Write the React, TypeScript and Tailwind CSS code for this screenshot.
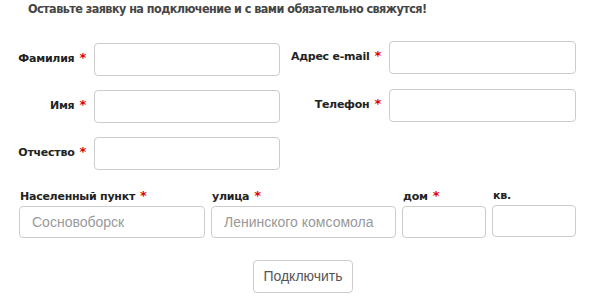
import React from "react";

const labelFont = { fontFamily: '"DejaVu Sans", Verdana, sans-serif' };

function Star() {
  return <span className="text-[#e00000] ml-[5px] text-[13px] leading-none font-bold">*</span>;
}

function Field({ label, labelW, inputW }: { label: string; labelW: number; inputW: number }) {
  return (
    <div className="flex items-center">
      <div
        className="text-right text-[11px] font-bold text-[#222] pr-[8px] tracking-[-0.25px]"
        style={{ width: labelW }}
      >
        {label}
        <Star />
      </div>
      <input
        className="h-[33px] border border-[#cccccc] rounded-[4px] bg-white outline-none"
        style={{ width: inputW }}
      />
    </div>
  );
}

export default function App() {
  return (
    <div className="w-[600px] h-[301px] bg-white relative overflow-hidden" style={labelFont}>
      <div
        className="pl-[28px] pt-0 text-[12.5px] leading-[18px] font-bold text-[#454545] tracking-[-0.55px]"
        style={{ fontFamily: '"DejaVu Sans Condensed", "DejaVu Sans", sans-serif' }}
      >
        Оставьте заявку на подключение и с вами обязательно свяжутся!
      </div>
      <div className="flex">
        <div className="flex flex-col gap-[14px] mt-[25px] w-[280px]">
          <Field label="Фамилия" labelW={94} inputW={186} />
          <Field label="Имя" labelW={94} inputW={186} />
          <Field label="Отчество" labelW={94} inputW={186} />
        </div>
        <div className="flex flex-col gap-[15px] mt-[23px]">
          <Field label="Адрес e-mail" labelW={109} inputW={187} />
          <Field label="Телефон" labelW={109} inputW={187} />
        </div>
      </div>
      <div className="flex gap-[6px] pl-[19px] mt-[19px]">
        {[
          { l: "Населенный пункт", star: true, w: 186, ph: "Сосновоборск" },
          { l: "улица", star: true, w: 185, ph: "Ленинского комсомола" },
          { l: "дом", star: true, w: 84, ph: "" },
          { l: "кв.", star: false, w: 84, ph: "" },
        ].map((f) => (
          <div key={f.l} className="flex flex-col" style={{ width: f.w }}>
            <div className="text-[11px] font-bold text-[#222] leading-[14px] mb-[2px] tracking-[-0.25px] pl-[1px]">
              {f.l}
              {f.star && <Star />}
            </div>
            <input
              placeholder={f.ph}
              className="h-[32px] border border-[#cccccc] rounded-[4px] bg-white outline-none px-[12px] text-[14px] text-[#555] placeholder:text-[#999]"
              style={{ fontFamily: '"Liberation Sans", Arial, sans-serif', width: f.w }}
            />
          </div>
        ))}
      </div>
      <div className="flex justify-center mt-[22px] pl-[6px]">
        <button
          className="w-[100px] h-[33px] border border-[#cccccc] rounded-[4px] bg-white text-[14px] text-[#555]"
          style={{ fontFamily: '"Liberation Sans", Arial, sans-serif' }}
        >
          Подключить
        </button>
      </div>
    </div>
  );
}
